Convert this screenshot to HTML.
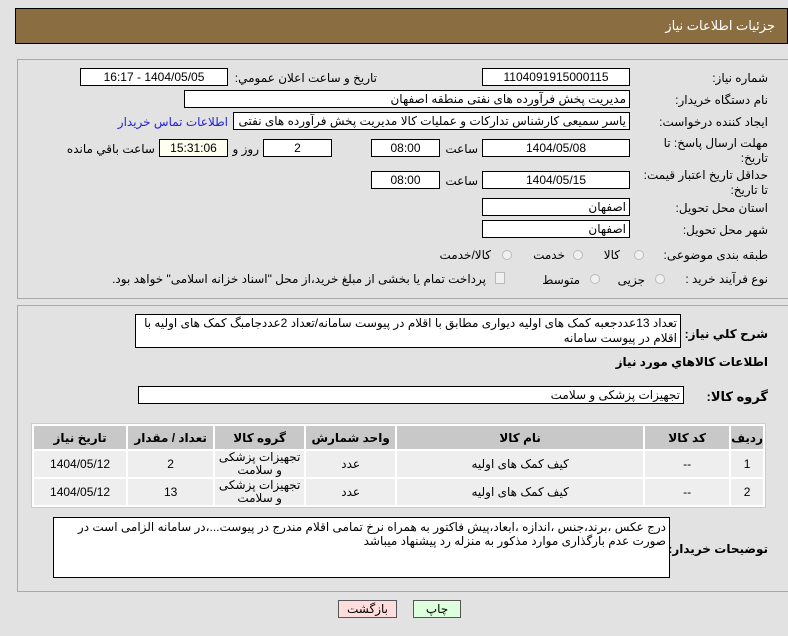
<!DOCTYPE html><html><head><meta charset="utf-8"><style>
body{margin:0;width:788px;height:636px;background:#e2e2e2;font-family:"Liberation Sans","DejaVu Sans",sans-serif;font-size:12px;color:#000;position:relative;overflow:hidden}
div,span{position:absolute;box-sizing:border-box}
.hdr{left:15px;top:8px;width:773px;height:36px;background:#8b6d42;border:1px solid #000}
.hdr span{right:12px;top:9px;color:#fff;font-size:13px}
.pan{border:1px solid #a8a8a8;border-right:none}
.l{direction:rtl;white-space:nowrap}
.b{background:#fff;border:1px solid #000;height:18px;line-height:16px;direction:rtl;white-space:nowrap;overflow:hidden;padding:0 3px}
.c{text-align:center}
.r{width:10px;height:10px;border:1px solid #bbb;border-radius:50%;background:#f0f0f0}
table{position:absolute;left:31px;top:423px;width:735px;border-collapse:separate;border-spacing:2px;direction:rtl;background:#fff;border:1px solid #ccc}
th{background:#c8c8c8;height:23px;padding:0;font-weight:bold;font-size:12px}
td{background:#eee;text-align:center;height:26px;padding:0;font-size:12px;line-height:13px}
.btn{height:18px;border:1px solid #555;text-align:center;line-height:16px}
</style></head><body>
<div class="hdr"><span>جزئیات اطلاعات نیاز</span></div>
<div class="pan" style="left:17px;top:59px;width:771px;height:240px"></div>
<div class="pan" style="left:17px;top:305px;width:771px;height:287px"></div>

<span class="l" style="right:20px;top:71px">شماره نیاز:</span>
<div class="b c" style="left:482px;top:68px;width:148px">1104091915000115</div>
<span class="l" style="right:411px;top:71px">تاريخ و ساعت اعلان عمومي:</span>
<div class="b c" style="left:80px;top:68px;width:148px">1404/05/05 - 16:17</div>

<span class="l" style="right:20px;top:93px">نام دستگاه خریدار:</span>
<div class="b" style="left:184px;top:90px;width:446px">مدیریت پخش فرآورده های نفتی منطقه اصفهان</div>

<span class="l" style="right:20px;top:115px">ایجاد کننده درخواست:</span>
<div class="b" style="left:233px;top:112px;width:397px">یاسر  سمیعی کارشناس تدارکات و عملیات کالا مدیریت پخش فرآورده های نفتی</div>
<span class="l" style="right:560px;top:115px;color:#2323d8">اطلاعات تماس خریدار</span>

<span class="l" style="right:20px;top:136px">مهلت ارسال پاسخ: تا</span>
<span class="l" style="right:20px;top:151px">تاریخ:</span>
<div class="b c" style="left:482px;top:139px;width:148px">1404/05/08</div>
<span class="l" style="right:310px;top:142px">ساعت</span>
<div class="b c" style="left:371px;top:139px;width:69px">08:00</div>
<div class="b c" style="left:263px;top:139px;width:69px">2</div>
<span class="l" style="right:529px;top:142px">روز و</span>
<div class="b c" style="left:159px;top:139px;width:69px;background:#fffff0">15:31:06</div>
<span class="l" style="right:633px;top:142px">ساعت باقي مانده</span>

<span class="l" style="right:20px;top:168px">حداقل تاریخ اعتبار قیمت:</span>
<span class="l" style="right:20px;top:183px">تا تاریخ:</span>
<div class="b c" style="left:482px;top:171px;width:148px">1404/05/15</div>
<span class="l" style="right:310px;top:174px">ساعت</span>
<div class="b c" style="left:371px;top:171px;width:69px">08:00</div>

<span class="l" style="right:20px;top:201px">استان محل تحویل:</span>
<div class="b" style="left:482px;top:198px;width:148px">اصفهان</div>
<span class="l" style="right:20px;top:223px">شهر محل تحویل:</span>
<div class="b" style="left:482px;top:220px;width:148px">اصفهان</div>

<span class="l" style="right:20px;top:248px">طبقه بندی موضوعی:</span>
<div class="r" style="left:634px;top:250px"></div><span class="l" style="right:168px;top:248px">کالا</span>
<div class="r" style="left:573px;top:250px"></div><span class="l" style="right:223px;top:248px">خدمت</span>
<div class="r" style="left:502px;top:250px"></div><span class="l" style="right:297px;top:248px">کالا/خدمت</span>

<span class="l" style="right:20px;top:272px">نوع فرآیند خرید :</span>
<div class="r" style="left:655px;top:274px"></div><span class="l" style="right:143px;top:273px">جزیی</span>
<div class="r" style="left:590px;top:274px"></div><span class="l" style="right:208px;top:273px">متوسط</span>
<div style="left:495px;top:272px;width:10px;height:12px;border:1px solid #bbb;background:#f0f0f0"></div>
<span class="l" style="right:302px;top:272px">پرداخت تمام یا بخشی از مبلغ خرید،از محل "اسناد خزانه اسلامی" خواهد بود.</span>

<span class="l" style="right:20px;top:327px;font-weight:bold">شرح کلي نياز:</span>
<div style="left:135px;top:314px;width:546px;height:34px;background:#fff;border:1px solid #000;direction:rtl;padding:1px 3px;line-height:15px">تعداد 13عددجعبه کمک های اولیه دیواری مطابق با اقلام در پیوست سامانه/تعداد 2عددجامبگ کمک های اولیه با اقلام در پیوست سامانه</div>
<span class="l" style="right:20px;top:355px;font-weight:bold">اطلاعات کالاهاي مورد نياز</span>
<span class="l" style="right:20px;top:389px;font-weight:bold;font-size:13px">گروه کالا:</span>
<div class="b" style="left:138px;top:386px;width:546px">تجهیزات پزشکی و سلامت</div>

<table><tr><th style="width:26px">ردیف</th><th style="width:84px">کد کالا</th><th style="width:246px">نام کالا</th><th style="width:89px">واحد شمارش</th><th style="width:89px">گروه کالا</th><th style="width:85px">تعداد / مقدار</th><th>تاریخ نیاز</th></tr>
<tr><td>1</td><td>--</td><td>کیف کمک های اولیه</td><td>عدد</td><td>تجهیزات پزشکی و سلامت</td><td>2</td><td>1404/05/12</td></tr>
<tr><td>2</td><td>--</td><td>کیف کمک های اولیه</td><td>عدد</td><td>تجهیزات پزشکی و سلامت</td><td>13</td><td>1404/05/12</td></tr></table>

<span class="l" style="right:20px;top:542px;font-weight:bold">توضیحات خریدار:</span>
<div style="left:53px;top:517px;width:617px;height:61px;background:#fff;border:1px solid #000;direction:rtl;padding:2px 3px;line-height:14px">درج عکس ،برند،جنس ،اندازه ،ابعاد،پیش فاکتور به همراه نرخ تمامی اقلام مندرج در پیوست...،در سامانه الزامی است در صورت عدم بارگذاری موارد مذکور به منزله رد پیشنهاد میباشد</div>

<div class="btn" style="left:338px;top:600px;width:59px;background:#fdd">بازگشت</div>
<div class="btn" style="left:413px;top:600px;width:48px;background:#dfd">چاپ</div>
</body></html>
